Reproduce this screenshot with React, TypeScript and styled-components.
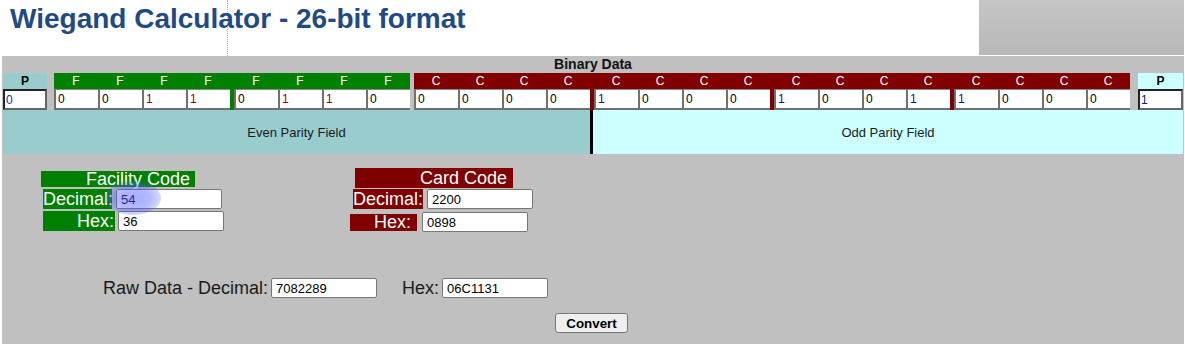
import React from 'react';
import styled, { createGlobalStyle } from 'styled-components';

const GlobalStyle = createGlobalStyle`
  html, body {
    margin: 0;
    padding: 0;
    background: #ffffff;
  }
  body {
    font-family: 'Liberation Sans', Arial, sans-serif;
    overflow: hidden;
  }
`;

// Header
const Header = styled.header`
  display: grid;
  grid-template-columns: 228px 751px 205px 1fr;
  height: 56px;
`;

const DottedRule = styled.div`
  grid-row: 1;
  grid-column: 1;
  border-right: 1px dotted #b8b8b8;
`;

const Title = styled.h1`
  grid-row: 1;
  grid-column: 1 / 3;
  z-index: 1;
  margin: 0;
  padding: 3px 0 0 10px;
  font-size: 28px;
  line-height: 32px;
  font-weight: bold;
  color: #1f4a85;
  white-space: nowrap;
`;

const ShadeBox = styled.div`
  grid-row: 1;
  grid-column: 3;
  height: 55px;
  background: linear-gradient(#c5c5c5, #b8b8b8);
`;

// Main panel
const Panel = styled.main`
  position: relative;
  margin-left: 2px;
  width: 1182px;
  height: 288px;
  box-sizing: border-box;
  padding: 0 1px;
  background: #c0c0c0;
`;

const Caption = styled.div`
  height: 17px;
  font-size: 14px;
  line-height: 17px;
  font-weight: bold;
  color: #111;
  text-align: center;
`;

const BitRow = styled.div`
  display: flex;
  align-items: flex-start;
`;

const ParityCol = styled.div<{ $ml: number; $w: number }>`
  display: flex;
  flex-direction: column;
  width: ${(p) => p.$w}px;
  margin-left: ${(p) => p.$ml}px;
`;

const ParityHead = styled.div<{ $bg: string }>`
  height: 16px;
  background: ${(p) => p.$bg};
  font-size: 12px;
  line-height: 16px;
  font-weight: bold;
  color: #000;
  text-align: center;
`;

const ParityInput = styled.input<{ $color: string }>`
  box-sizing: border-box;
  width: 100%;
  height: 21px;
  margin: 0;
  padding: 0 0 0 1px;
  border: 2px solid;
  border-color: #222 #666 #666 #222;
  background: #fff;
  font-family: 'Liberation Sans', Arial, sans-serif;
  font-size: 12px;
  color: ${(p) => p.$color};
  outline: none;
`;

const ColorBlock = styled.div<{ $bg: string; $ml: number }>`
  display: flex;
  gap: 4px;
  margin-left: ${(p) => p.$ml}px;
  background: ${(p) => p.$bg};
`;

const BitGroup = styled.div`
  display: flex;
`;

const BitCell = styled.div`
  display: flex;
  flex-direction: column;
  width: 44px;
`;

const BitLetter = styled.div`
  height: 16px;
  font-size: 12px;
  line-height: 16px;
  color: #ffffff;
  text-align: center;
`;

const BitInput = styled.input<{ $color: string }>`
  box-sizing: border-box;
  width: 44px;
  height: 21px;
  margin: 0;
  padding: 0 0 0 2px;
  border-style: solid;
  border-width: 1px 0 2px 2px;
  border-color: #8a8a8a #fff #707070 #707070;
  background: #fff;
  font-family: 'Liberation Sans', Arial, sans-serif;
  font-size: 12px;
  color: ${(p) => p.$color};
  outline: none;
`;

const ParityBand = styled.div`
  display: grid;
  grid-template-columns: 587px 3px 1fr;
  height: 44px;
`;

const BandField = styled.div<{ $bg: string }>`
  display: flex;
  align-items: center;
  justify-content: center;
  background: ${(p) => p.$bg};
  font-size: 13px;
  color: #1a1a1a;
`;

const BandDivider = styled.div`
  background: #000;
`;

// Decimal / hex fields
const FieldsRow = styled.div`
  display: flex;
  align-items: flex-start;
`;

const FieldGroup = styled.div<{ $ml: number; $w?: number }>`
  display: flex;
  flex-direction: column;
  align-items: flex-start;
  margin-left: ${(p) => p.$ml}px;
  width: ${(p) => (p.$w ? `${p.$w}px` : 'auto')};
`;

const GroupTitle = styled.div<{ $bg: string; $w: number; $h: number; $mt: number; $ml: number; $pr: number }>`
  box-sizing: border-box;
  width: ${(p) => p.$w}px;
  height: ${(p) => p.$h}px;
  margin: ${(p) => p.$mt}px 0 0 ${(p) => p.$ml}px;
  padding-right: ${(p) => p.$pr}px;
  background: ${(p) => p.$bg};
  font-size: 18px;
  line-height: ${(p) => p.$h}px;
  color: #fff;
  text-align: right;
  white-space: nowrap;
`;

const FieldRow = styled.div<{ $mt: number }>`
  display: flex;
  align-items: center;
  height: 20px;
  margin-top: ${(p) => p.$mt}px;
`;

const FieldLabel = styled.span<{ $bg: string; $w: number; $h: number; $ml: number; $pr: number }>`
  box-sizing: border-box;
  width: ${(p) => p.$w}px;
  height: ${(p) => p.$h}px;
  margin-left: ${(p) => p.$ml}px;
  padding-right: ${(p) => p.$pr}px;
  background: ${(p) => p.$bg};
  font-size: 18px;
  line-height: ${(p) => p.$h}px;
  color: #fff;
  text-align: right;
  white-space: nowrap;
`;

const TextBox = styled.input<{ $ml: number }>`
  box-sizing: border-box;
  width: 106px;
  height: 20px;
  margin: 0 0 0 ${(p) => p.$ml}px;
  padding: 0 0 0 4px;
  border: 1px solid #767676;
  border-radius: 2px;
  background: #fff;
  font-family: 'Liberation Sans', Arial, sans-serif;
  font-size: 13px;
  color: #000;
  outline: none;
`;

const RawRow = styled.div`
  display: flex;
  align-items: center;
  height: 20px;
  margin: 46px 0 0 100px;
`;

const RawLabel = styled.span<{ $ml: number }>`
  margin-left: ${(p) => p.$ml}px;
  font-size: 18px;
  line-height: 20px;
  color: #1a1a1a;
  white-space: nowrap;
`;

const ButtonRow = styled.div`
  display: flex;
  justify-content: center;
  margin-top: 15px;
  padding-right: 3px;
`;

const ConvertButton = styled.button`
  box-sizing: border-box;
  width: 73px;
  height: 20px;
  padding: 0;
  border: 1px solid #767676;
  border-radius: 3px;
  background: #efefef;
  font-family: 'Liberation Sans', Arial, sans-serif;
  font-size: 13.33px;
  font-weight: bold;
  color: #000;
`;

// cursor highlight left over the facility decimal box
const CursorGlow = styled.div`
  position: absolute;
  left: 103px;
  top: 125px;
  width: 56px;
  height: 34px;
  border-radius: 50%;
  background: radial-gradient(
    ellipse at center,
    rgba(80, 90, 255, 0.5) 0%,
    rgba(80, 90, 255, 0.42) 45%,
    rgba(80, 90, 255, 0) 100%
  );
  pointer-events: none;
`;

const GREEN = '#008000';
const MAROON = '#800000';

const facilityBits = [
  [0, 0, 1, 1],
  [0, 1, 1, 0],
];

const cardBits = [
  [0, 0, 0, 0],
  [1, 0, 0, 0],
  [1, 0, 0, 1],
  [1, 0, 0, 0],
];

const BitBlock = ({
  groups,
  letter,
  bg,
  ml,
  oneColor,
}: {
  groups: number[][];
  letter: string;
  bg: string;
  ml: number;
  oneColor: string;
}) => (
  <ColorBlock $bg={bg} $ml={ml}>
    {groups.map((group, gi) => (
      <BitGroup key={gi}>
        {group.map((bit, bi) => (
          <BitCell key={bi}>
            <BitLetter>{letter}</BitLetter>
            <BitInput readOnly value={String(bit)} $color={bit ? oneColor : '#000'} />
          </BitCell>
        ))}
      </BitGroup>
    ))}
  </ColorBlock>
);

const App = () => {
  return (
    <>
      <GlobalStyle />
      <Header>
        <DottedRule />
        <Title>Wiegand Calculator - 26-bit format</Title>
        <ShadeBox />
      </Header>

      <Panel>
        <Caption>Binary Data</Caption>
        <BitRow>
          <ParityCol $ml={0} $w={44}>
            <ParityHead $bg="#99cccc">P</ParityHead>
            <ParityInput readOnly value="0" $color="#0030c0" />
          </ParityCol>
          <BitBlock groups={facilityBits} letter="F" bg={GREEN} ml={7} oneColor="#9a0000" />
          <BitBlock groups={cardBits} letter="C" bg={MAROON} ml={4} oneColor="#00207a" />
          <ParityCol $ml={8} $w={45}>
            <ParityHead $bg="#ccffff">P</ParityHead>
            <ParityInput readOnly value="1" $color="#00207a" />
          </ParityCol>
        </BitRow>

        <ParityBand>
          <BandField $bg="#99cccc">Even Parity Field</BandField>
          <BandDivider />
          <BandField $bg="#ccffff">Odd Parity Field</BandField>
        </ParityBand>

        <FieldsRow>
          <FieldGroup $ml={38} $w={309}>
            <GroupTitle $bg={GREEN} $w={154} $h={16} $mt={17} $ml={0} $pr={5}>
              Facility Code
            </GroupTitle>
            <FieldRow $mt={2}>
              <FieldLabel $bg={GREEN} $w={69} $h={20} $ml={2} $pr={0}>
                Decimal:
              </FieldLabel>
              <TextBox readOnly value="54" $ml={4} />
            </FieldRow>
            <FieldRow $mt={2}>
              <FieldLabel $bg={GREEN} $w={72} $h={20} $ml={2} $pr={1}>
                Hex:
              </FieldLabel>
              <TextBox readOnly value="36" $ml={3} />
            </FieldRow>
          </FieldGroup>

          <FieldGroup $ml={0}>
            <GroupTitle $bg={MAROON} $w={158} $h={20} $mt={14} $ml={5} $pr={6}>
              Card Code
            </GroupTitle>
            <FieldRow $mt={1}>
              <FieldLabel $bg={MAROON} $w={70} $h={20} $ml={3} $pr={1}>
                Decimal:
              </FieldLabel>
              <TextBox readOnly value="2200" $ml={4} />
            </FieldRow>
            <FieldRow $mt={3}>
              <FieldLabel $bg={MAROON} $w={67} $h={17} $ml={0} $pr={6}>
                Hex:
              </FieldLabel>
              <TextBox readOnly value="0898" $ml={5} />
            </FieldRow>
          </FieldGroup>
        </FieldsRow>

        <RawRow>
          <RawLabel $ml={0}>Raw Data - Decimal:</RawLabel>
          <TextBox readOnly value="7082289" $ml={3} />
          <RawLabel $ml={25}>Hex:</RawLabel>
          <TextBox readOnly value="06C1131" $ml={3} />
        </RawRow>

        <ButtonRow>
          <ConvertButton type="button">Convert</ConvertButton>
        </ButtonRow>

        <CursorGlow />
      </Panel>
    </>
  );
};

export default App;
